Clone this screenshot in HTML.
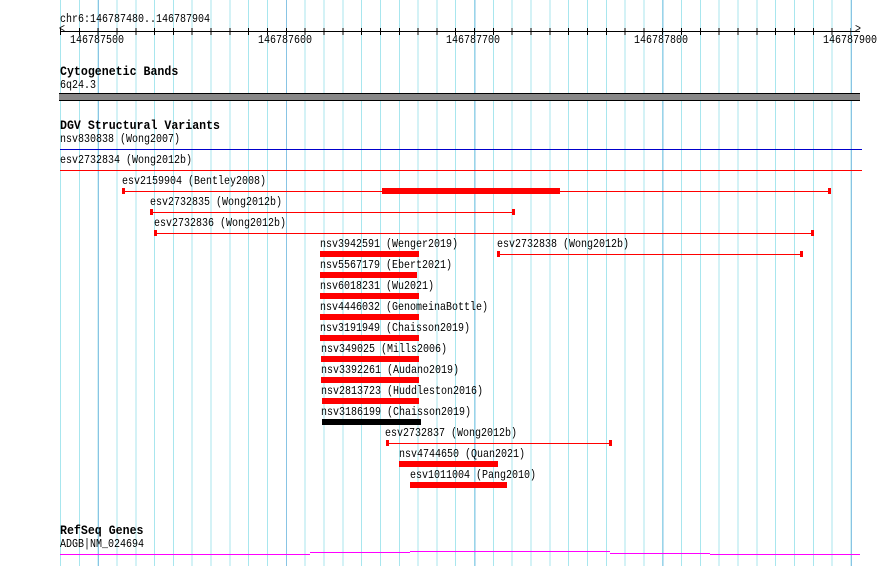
<!DOCTYPE html>
<html><head><meta charset="utf-8"><style>
html,body{margin:0;padding:0;background:#fff;}
body{width:890px;height:566px;position:relative;overflow:hidden;font-family:"Liberation Mono","DejaVu Sans Mono",monospace;font-size:10px;color:#000;}
.grid{position:absolute;left:60px;top:0;width:800px;height:566px;background:repeating-linear-gradient(to right,#a8e6ee 0,#a8e6ee 1px,transparent 1px,transparent 18.82px);}
.major{position:absolute;left:97.6px;top:0;width:800px;height:566px;background:repeating-linear-gradient(to right,#88c4e4 0,#88c4e4 1px,transparent 1px,transparent 188.2px);}
.ticks{position:absolute;left:60px;top:28px;width:791px;height:7px;background:repeating-linear-gradient(to right,#000 0,#000 1px,transparent 1px,transparent 18.82px);}
.t{position:absolute;white-space:pre;line-height:12px;margin-top:0px;transform:scaleY(1.15);transform-origin:0 0;}
.b{font-weight:bold;font-size:11.6px;}
.h{position:absolute;height:1px;}
.r{background:#f00;}
.k{background:#000;}
.c{position:absolute;width:3px;height:6px;background:#f00;}
.bar{position:absolute;height:6px;background:#f00;}
</style></head><body>
<div class="grid"></div><div class="major"></div>
<div class="t" style="left:60px;top:14px">chr6:146787480..146787904</div>
<div class="h k" style="left:60px;top:31px;width:800px"></div>
<div class="ticks"></div>
<div class="t" style="left:59px;top:24px">&lt;</div>
<div class="t" style="left:855px;top:24px">&gt;</div>
<div class="t" style="left:70px;top:35px">146787500</div>
<div class="t" style="left:258px;top:35px">146787600</div>
<div class="t" style="left:446px;top:35px">146787700</div>
<div class="t" style="left:634px;top:35px">146787800</div>
<div class="t" style="left:823px;top:35px">146787900</div>

<div class="t b" style="left:60px;top:66px">Cytogenetic Bands</div>
<div class="t" style="left:60px;top:80px">6q24.3</div>
<div style="position:absolute;left:59px;top:93px;width:801px;height:6px;background:#888;border-top:1px solid #000;border-bottom:1px solid #000;"></div>

<div class="t b" style="left:60px;top:120px">DGV Structural Variants</div>
<div class="t" style="left:60px;top:134px">nsv830838 (Wong2007)</div>
<div class="h" style="left:60px;top:149px;width:802px;background:#00c"></div>
<div class="t" style="left:60px;top:155px">esv2732834 (Wong2012b)</div>
<div class="h r" style="left:60px;top:170px;width:802px"></div>

<div class="t" style="left:122px;top:176px">esv2159904 (Bentley2008)</div>
<div class="h r" style="left:122px;top:191px;width:708px"></div>
<div class="c" style="left:122px;top:188px"></div><div class="c" style="left:828px;top:188px"></div>
<div class="bar" style="left:382px;top:188px;width:178px"></div>

<div class="t" style="left:150px;top:197px">esv2732835 (Wong2012b)</div>
<div class="h r" style="left:150px;top:212px;width:364px"></div>
<div class="c" style="left:150px;top:209px"></div><div class="c" style="left:512px;top:209px"></div>

<div class="t" style="left:154px;top:218px">esv2732836 (Wong2012b)</div>
<div class="h r" style="left:154px;top:233px;width:660px"></div>
<div class="c" style="left:154px;top:230px"></div><div class="c" style="left:811px;top:230px"></div>

<div class="t" style="left:320px;top:239px">nsv3942591 (Wenger2019)</div>
<div class="bar" style="left:320px;top:251px;width:99px"></div>
<div class="t" style="left:497px;top:239px">esv2732838 (Wong2012b)</div>
<div class="h r" style="left:497px;top:254px;width:305px"></div>
<div class="c" style="left:497px;top:251px"></div><div class="c" style="left:800px;top:251px"></div>

<div class="t" style="left:320px;top:260px">nsv5567179 (Ebert2021)</div>
<div class="bar" style="left:320px;top:272px;width:97px"></div>
<div class="t" style="left:320px;top:281px">nsv6018231 (Wu2021)</div>
<div class="bar" style="left:320px;top:293px;width:99px"></div>
<div class="t" style="left:320px;top:302px">nsv4446032 (GenomeinaBottle)</div>
<div class="bar" style="left:320px;top:314px;width:99px"></div>
<div class="t" style="left:320px;top:323px">nsv3191949 (Chaisson2019)</div>
<div class="bar" style="left:320px;top:335px;width:99px"></div>
<div class="t" style="left:321px;top:344px">nsv349025 (Mills2006)</div>
<div class="bar" style="left:321px;top:356px;width:98px"></div>
<div class="t" style="left:321px;top:365px">nsv3392261 (Audano2019)</div>
<div class="bar" style="left:321px;top:377px;width:98px"></div>
<div class="t" style="left:321px;top:386px">nsv2813723 (Huddleston2016)</div>
<div class="bar" style="left:322px;top:398px;width:97px"></div>
<div class="t" style="left:321px;top:407px">nsv3186199 (Chaisson2019)</div>
<div class="bar" style="left:322px;top:419px;width:99px;background:#000"></div>

<div class="t" style="left:385px;top:428px">esv2732837 (Wong2012b)</div>
<div class="h r" style="left:386px;top:443px;width:226px"></div>
<div class="c" style="left:386px;top:440px"></div><div class="c" style="left:609px;top:440px"></div>

<div class="t" style="left:399px;top:449px">nsv4744650 (Quan2021)</div>
<div class="bar" style="left:399px;top:461px;width:99px"></div>
<div class="t" style="left:410px;top:470px">esv1011004 (Pang2010)</div>
<div class="bar" style="left:410px;top:482px;width:97px"></div>

<div class="t b" style="left:60px;top:525px">RefSeq Genes</div>
<div class="t" style="left:60px;top:539px">ADGB|NM_024694</div>
<div class="h" style="left:60px;top:554px;width:250px;background:#f0f"></div>
<div class="h" style="left:310px;top:552px;width:100px;background:#f0f"></div>
<div class="h" style="left:410px;top:551px;width:200px;background:#f0f"></div>
<div class="h" style="left:610px;top:553px;width:100px;background:#f0f"></div>
<div class="h" style="left:710px;top:554px;width:150px;background:#f0f"></div>
</body></html>
